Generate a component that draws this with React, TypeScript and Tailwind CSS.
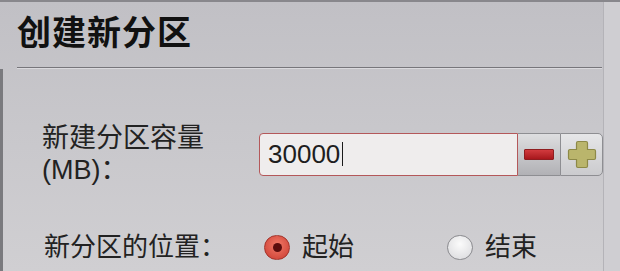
import React from "react";

function PlusIcon() {
  return (
    <svg width="30" height="29" viewBox="0 0 30 29">
      <path
        d="M11 1.5 h8 a1.5 1.5 0 0 1 1.5 1.5 v6.5 h6.5 a1.5 1.5 0 0 1 1.5 1.5 v7 a1.5 1.5 0 0 1 -1.5 1.5 h-6.5 v6.5 a1.5 1.5 0 0 1 -1.5 1.5 h-8 a1.5 1.5 0 0 1 -1.5 -1.5 v-6.5 h-6.5 a1.5 1.5 0 0 1 -1.5 -1.5 v-7 a1.5 1.5 0 0 1 1.5 -1.5 h6.5 v-6.5 a1.5 1.5 0 0 1 1.5 -1.5 z"
        fill="#bab56c"
        stroke="#8d8947"
        strokeWidth="1.2"
      />
    </svg>
  );
}

function Radio({ checked }: { checked?: boolean }) {
  if (checked) {
    return (
      <span className="flex h-[25px] w-[26px] items-center justify-center rounded-full border border-[#a3342b] bg-[radial-gradient(circle_at_50%_40%,#f27a68,#c93a2f)]">
        <span className="h-[9px] w-[9px] rounded-full bg-[#5c0d0d]" />
      </span>
    );
  }
  return (
    <span className="h-[25px] w-[26px] rounded-full border-[1.5px] border-[#8a8a8e] bg-[radial-gradient(circle_at_50%_35%,#fbfbfb,#d8d8db)]" />
  );
}

export default function App() {
  return (
    <div className="h-[271px] w-[620px] overflow-hidden border-t-2 border-[#88878c] bg-gradient-to-b from-[#c1c0c5] to-[#d0cfd2] font-['Liberation_Sans','Noto_Sans_CJK_SC',sans-serif] text-[#222222]">
      <div className="flex h-full">
        <div className="flex w-[604px] flex-col border-r border-[#b4b3b8]">
          {/* Título */}
          <div className="pl-[17px] pt-[14px]">
            <h1 className="text-[34px] font-bold leading-[34px] tracking-[1px] text-[#111111]">
              创建新分区
            </h1>
          </div>
          <div className="ml-[17px] mr-[1px] mt-[17px] h-px bg-[#77767b]" />
          <div className="ml-[17px] mr-[1px] h-px bg-[#dad9dd]" />

          {/* Formulário */}
          <div className="flex-1 border-l-[3px] border-[#7a7a7e] pl-[39px]">
            <div className="mt-[53px] flex items-center">
              <div className="w-[217px] text-[27px] leading-[32px]">
                <div>新建分区容量</div>
                <div>(MB)：</div>
              </div>
              <div className="flex h-[43px]">
                <div className="flex w-[259px] items-center rounded-l-[4px] border-[1.5px] border-[#b4585a] bg-[#efeded] pl-[8px] text-[26px] text-[#1e1e1e]">
                  30000
                  <span className="ml-[2px] h-[24px] w-px bg-[#1a1a1a]" />
                </div>
                <div className="flex w-[42px] items-center justify-center border-y border-[#8e8e92] bg-gradient-to-b from-[#dedee0] to-[#b1b1b5]">
                  <div className="h-[11px] w-[30px] rounded-[1px] border border-[#8f1d20] bg-gradient-to-b from-[#d23a3e] to-[#a8161c]" />
                </div>
                <div className="flex w-[43px] items-center justify-center rounded-r-[5px] border border-[#8e8e92] bg-gradient-to-b from-[#e6e6e8] to-[#cbcbce]">
                  <PlusIcon />
                </div>
              </div>
            </div>

            <div className="mt-[45px] flex h-[32px] items-center">
              <div className="w-[222px] pl-[2px] text-[26px] leading-[32px]">
                新分区的位置：
              </div>
              <label className="flex w-[183px] items-center gap-[12px]">
                <Radio checked />
                <span className="text-[26px] leading-[32px]">起始</span>
              </label>
              <label className="flex items-center gap-[12px]">
                <Radio />
                <span className="text-[26px] leading-[32px]">结束</span>
              </label>
            </div>
          </div>
        </div>
        <div className="flex-1 bg-[#cfced2]" />
      </div>
    </div>
  );
}
